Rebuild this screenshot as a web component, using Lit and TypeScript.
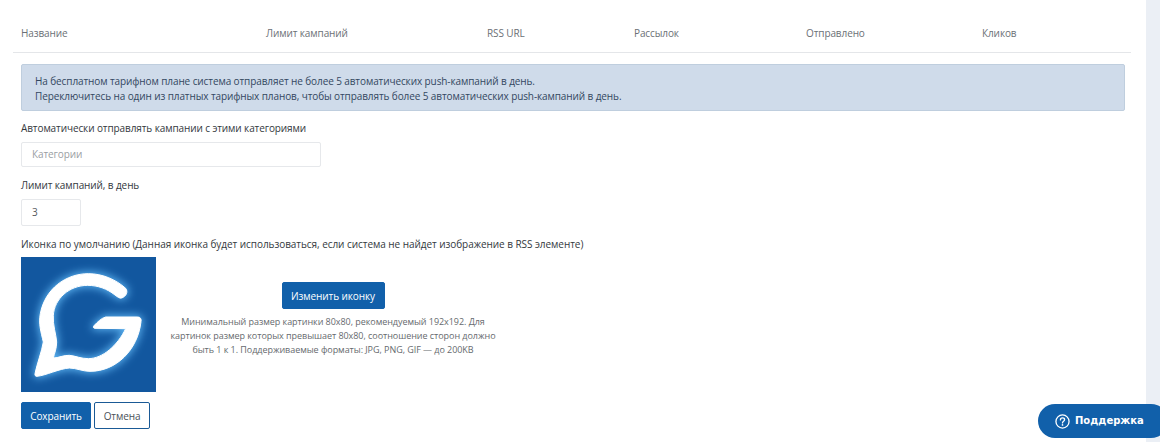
import { LitElement, html, css, svg } from "lit";
import { customElement } from "lit/decorators.js";

const columns = [
  ["Название", 245],
  ["Лимит кампаний", 221],
  ["RSS URL", 147],
  ["Рассылок", 172],
  ["Отправлено", 176],
  ["Кликов", 157],
] as const;

const G = "M42 350 C48 320 62 285 67 255 C60 225 52 200 58 170 C72 95 135 50 202 50 C245 50 285 68 314 94 C322 104 316 118 302 123 C296 125 290 120 282 114 C258 95 230 85 200 85 C145 85 100 125 97 175 C95 205 105 230 107 255 C107 275 100 290 97 303 C112 303 128 294 145 295 C165 297 180 305 202 305 C245 305 290 265 314 215 L222 214 C216 214 216 208 220 205 C230 195 240 184 254 180 L350 180 C358 180 362 186 360 194 C350 280 285 343 207 343 C185 343 165 333 145 333 C115 335 75 355 48 358 C43 358 41 355 42 350 Z";

const logo = svg`
  <svg class="logo" viewBox="0 0 405 405" aria-hidden="true">
    <defs>
      <filter id="glow" x="-30%" y="-30%" width="160%" height="160%"><feGaussianBlur stdDeviation="13"/></filter>
      <filter id="soft" x="-10%" y="-10%" width="120%" height="120%"><feGaussianBlur stdDeviation="1.5"/></filter>
    </defs>
    <rect width="405" height="405" fill="#12579f"/>
    <path fill="#5db4f2" stroke="#5db4f2" stroke-width="10" filter="url(#glow)" d="${G}"/>
    <path fill="#fff" stroke="#fff" stroke-width="3" stroke-linejoin="round" filter="url(#soft)" d="${G}"/>
  </svg>`;

@customElement("app-root")
export class AppRoot extends LitElement {
  static styles = css`
    :host {
      display: block;
      position: relative;
      width: 1160px;
      height: 442px;
      overflow: hidden;
      background: #ebeff5;
      font-family: "Open Sans", "Noto Sans", sans-serif;
      font-size: 10px;
      line-height: 14px;
      letter-spacing: -0.1px;
      color: #4a4f55;
    }
    .page {
      width: 1146px;
      height: 442px;
      box-sizing: border-box;
      background: #fff;
      padding: 0 15px 0 13px;
    }
    .thead {
      display: flex;
      height: 53px;
      box-sizing: border-box;
      border-bottom: 1px solid #e4e6e9;
      padding-top: 26px;
      color: #6b7076;
    }
    .thead span {
      box-sizing: border-box;
      padding-left: 8px;
      flex: none;
    }
    .form {
      padding: 11px 6px 0 8px;
    }
    .alert {
      box-sizing: border-box;
      height: 47px;
      padding: 9px 13px;
      background: #cfdbea;
      border: 1px solid #bfcede;
      border-radius: 2px;
      color: #33475f;
      line-height: 15px;
    }
    label {
      display: block;
      color: #33383d;
      line-height: 14px;
    }
    .l1 { margin-top: 10px; }
    .field {
      display: block;
      box-sizing: border-box;
      margin-top: 7px;
      height: 25px;
      padding: 0 10px;
      background: #fff;
      border: 1px solid #e6e8eb;
      border-radius: 2px;
      line-height: 23px;
    }
    .select { width: 300px; color: #9a9ea3; }
    .num { width: 60px; height: 27px; line-height: 25px; color: #55595e; }
    .l2 { margin-top: 11px; }
    .l3 { margin-top: 11px; letter-spacing: -0.055px; }
    .icon-row {
      display: flex;
      margin-top: 6px;
    }
    .logo {
      display: block;
      width: 135px;
      height: 135px;
      flex: none;
    }
    .change {
      display: flex;
      flex-direction: column;
      align-items: center;
      width: 330px;
      margin-left: 12px;
      padding-top: 25px;
    }
    button {
      box-sizing: border-box;
      height: 27px;
      border-radius: 2px;
      font: inherit;
      letter-spacing: inherit;
      padding: 0;
    }
    .primary {
      background: #1160aa;
      border: 1px solid #1160aa;
      color: #fff;
    }
    .change .primary { width: 103px; }
    .help {
      margin: 6px 0 0;
      width: 330px;
      text-align: center;
      color: #666a6e;
      font-size: 9px;
      line-height: 14px;
      letter-spacing: -0.05px;
    }
    .actions {
      display: flex;
      gap: 3px;
      margin-top: 10px;
    }
    .save { width: 70px; }
    .cancel {
      width: 56px;
      background: #fff;
      border: 1px solid #1a5a96;
      color: #4a5058;
    }
    .support {
      position: absolute;
      left: 1038px;
      top: 404px;
      width: 130px;
      height: 34px;
      box-sizing: border-box;
      padding-left: 17px;
      display: flex;
      align-items: center;
      gap: 5px;
      background: #1160aa;
      border-radius: 17px;
      color: #fff;
      font-family: "DejaVu Sans", sans-serif;
      font-weight: 700;
      font-size: 10px;
      letter-spacing: 0;
    }
    .support svg { width: 15px; height: 15px; flex: none; }
  `;

  render() {
    return html`
      <div class="page">
        <div class="thead">
          ${columns.map(([t, w]) => html`<span style="width:${w}px">${t}</span>`)}
        </div>
        <div class="form">
          <div class="alert">
            На бесплатном тарифном плане система отправляет не более 5 автоматических push-кампаний в день.<br />
            Переключитесь на один из платных тарифных планов, чтобы отправлять более 5 автоматических push-кампаний в день.
          </div>
          <label class="l1">Автоматически отправлять кампании с этими категориями</label>
          <div class="field select">Категории</div>
          <label class="l2">Лимит кампаний, в день</label>
          <div class="field num">3</div>
          <label class="l3">Иконка по умолчанию (Данная иконка будет использоваться, если система не найдет изображение в RSS элементе)</label>
          <div class="icon-row">
            ${logo}
            <div class="change">
              <button class="primary">Изменить иконку</button>
              <p class="help">Минимальный размер картинки 80х80, рекомендуемый 192х192. Для картинок размер которых превышает 80х80, соотношение сторон должно быть 1 к 1. Поддерживаемые форматы: JPG, PNG, GIF — до 200KB</p>
            </div>
          </div>
          <div class="actions">
            <button class="primary save">Сохранить</button>
            <button class="cancel">Отмена</button>
          </div>
        </div>
      </div>
      <div class="support">
        <svg viewBox="0 0 16 16" fill="none" stroke="#fff" stroke-width="1.4" aria-hidden="true">
          <circle cx="8" cy="8" r="7"/>
          <path d="M5.8 6.3c0-1.3 1-2.1 2.2-2.1s2.2.8 2.2 1.9c0 1.6-2.2 1.7-2.2 3.4" stroke-linecap="round"/>
          <circle cx="8" cy="11.6" r=".9" fill="#fff" stroke="none"/>
        </svg>
        <span>Поддержка</span>
      </div>
    `;
  }
}
